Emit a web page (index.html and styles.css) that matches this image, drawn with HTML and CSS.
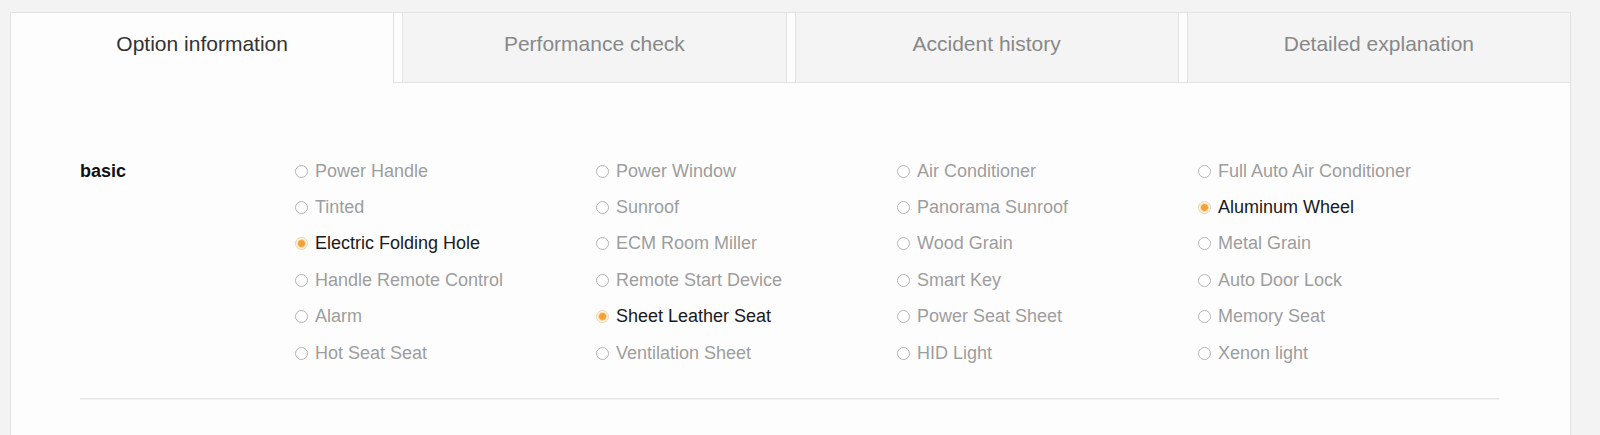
FILE: index.html
```html
<!DOCTYPE html>
<html lang="en">
<head>
    <meta charset="UTF-8">
    <meta name="viewport" content="width=device-width, initial-scale=1.0">
    <title>Vehicle Details</title>
    <link rel="stylesheet" href="styles.css">
</head>
<body>
    <div class="panel">
        <div class="tabs">
            <div class="tab active">Option information</div>
            <div class="tab">Performance check</div>
            <div class="tab">Accident history</div>
            <div class="tab">Detailed explanation</div>
        </div>

        <div class="content">
            <div class="group">
                <div class="group-title">basic</div>
                <div class="options">
                    <label class="option"><input type="radio" disabled> Power Handle</label>
                    <label class="option"><input type="radio" disabled> Power Window</label>
                    <label class="option"><input type="radio" disabled> Air Conditioner</label>
                    <label class="option"><input type="radio" disabled> Full Auto Air Conditioner</label>

                    <label class="option"><input type="radio" disabled> Tinted</label>
                    <label class="option"><input type="radio" disabled> Sunroof</label>
                    <label class="option"><input type="radio" disabled> Panorama Sunroof</label>
                    <label class="option on"><input type="radio" checked disabled> Aluminum Wheel</label>

                    <label class="option on"><input type="radio" checked disabled> Electric Folding Hole</label>
                    <label class="option"><input type="radio" disabled> ECM Room Miller</label>
                    <label class="option"><input type="radio" disabled> Wood Grain</label>
                    <label class="option"><input type="radio" disabled> Metal Grain</label>

                    <label class="option"><input type="radio" disabled> Handle Remote Control</label>
                    <label class="option"><input type="radio" disabled> Remote Start Device</label>
                    <label class="option"><input type="radio" disabled> Smart Key</label>
                    <label class="option"><input type="radio" disabled> Auto Door Lock</label>

                    <label class="option"><input type="radio" disabled> Alarm</label>
                    <label class="option on"><input type="radio" checked disabled> Sheet Leather Seat</label>
                    <label class="option"><input type="radio" disabled> Power Seat Sheet</label>
                    <label class="option"><input type="radio" disabled> Memory Seat</label>

                    <label class="option"><input type="radio" disabled> Hot Seat Seat</label>
                    <label class="option"><input type="radio" disabled> Ventilation Sheet</label>
                    <label class="option"><input type="radio" disabled> HID Light</label>
                    <label class="option"><input type="radio" disabled> Xenon light</label>
                </div>
            </div>
            <div class="divider"></div>
        </div>
    </div>
</body>
</html>
```

FILE: styles.css
```css
html, body {
    margin: 0;
    height: 100%;
    overflow: hidden;
}
body {
    background-color: #f3f3f3;
    font-family: "Liberation Sans", Arial, sans-serif;
    padding: 12px 0 0 10px;
    box-sizing: border-box;
}
.panel {
    width: 1561px;
    height: 600px;
    box-sizing: border-box;
    border: 1px solid #e2e2e2;
    background-color: #fdfdfd;
}
.tabs {
    display: flex;
    gap: 8px;
    border-bottom: 1px solid #e2e2e2;
}
.tab {
    flex: 1;
    height: 69px;
    box-sizing: border-box;
    padding-top: 19px;
    line-height: 24px;
    font-size: 21px;
    text-align: center;
    color: #888;
    background-color: #f4f4f4;
    border-left: 1px solid #e2e2e2;
    border-right: 1px solid #e2e2e2;
}
.tab:last-child {
    border-right: none;
}
.tab.active {
    color: #333;
    background-color: #fdfdfd;
    border-left: none;
    height: 70px;
    margin-bottom: -1px;
}
.content {
    padding: 70px 0 0 69px;
}
.group {
    display: flex;
}
.group-title {
    width: 214px;
    font-size: 18px;
    font-weight: bold;
    line-height: 36.4px;
    color: #111;
}
.options {
    display: grid;
    grid-template-columns: repeat(4, 301px);
}
.option {
    display: flex;
    align-items: center;
    gap: 7px;
    height: 36.4px;
    font-size: 18px;
    color: #9d9d9d;
}
.option.on {
    color: #1a1a1a;
}
.option input {
    appearance: none;
    -webkit-appearance: none;
    margin: 0 0 0 1px;
    width: 13px;
    height: 13px;
    box-sizing: border-box;
    border: 1px solid #b4b4b4;
    border-radius: 50%;
    background-color: #fff;
}
.option input:checked {
    border-color: #ead2ad;
    background: radial-gradient(circle, #f4a236 0, #f4a236 3px, #fbdcb0 4px, #fff 5.5px);
}
.divider {
    width: 1419px;
    margin-top: 27px;
    border-top: 1px solid #e4e4e4;
    box-shadow: 0 1px 0 #f1f1f1;
}
```
